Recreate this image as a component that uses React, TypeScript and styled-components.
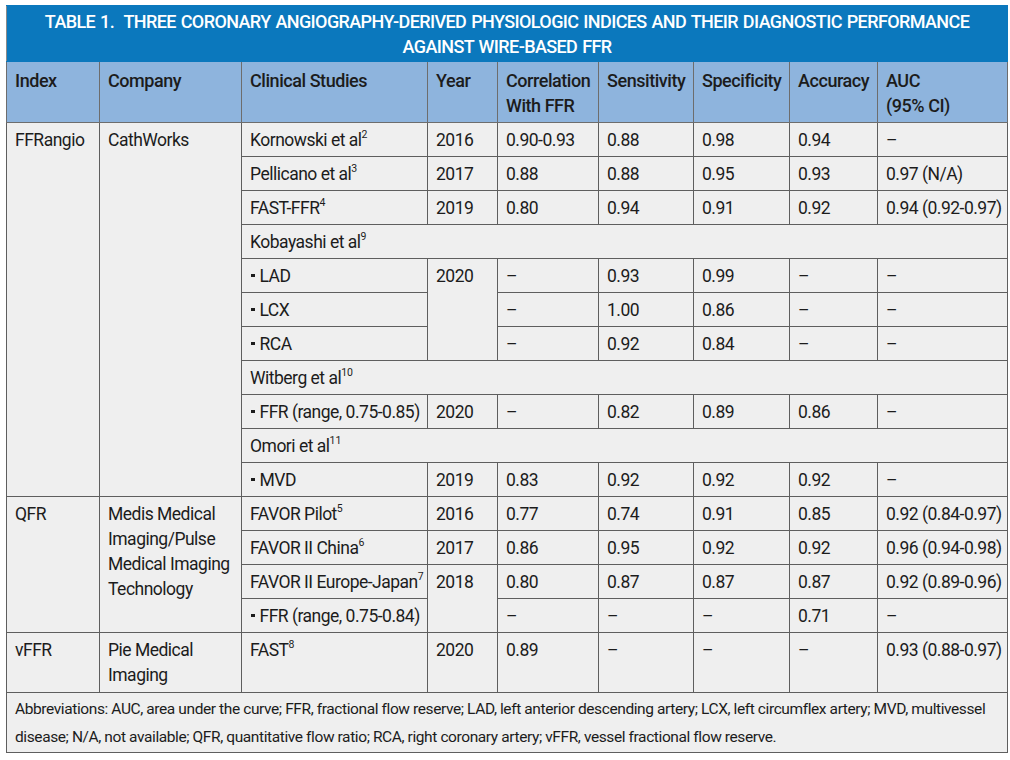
import styled, { createGlobalStyle } from "styled-components";

const Global = createGlobalStyle`
  body {
    margin: 0;
    background: #ffffff;
    font-family: Roboto, "Liberation Sans", sans-serif;
  }
`;

const Page = styled.div`
  padding: 5px 0 0 6px;
`;

const Table = styled.table`
  width: 1001px;
  border-collapse: collapse;
  table-layout: fixed;
  font-family: Roboto, "Liberation Sans", sans-serif;
  color: #1c1c1c;
`;

const TitleCell = styled.th`
  background: #0b78bd;
  color: #ffffff;
  font-size: 18px;
  font-weight: 500;
  line-height: 25px;
  letter-spacing: -0.6px;
  word-spacing: 1px;
  text-transform: uppercase;
  text-align: center;
  padding: 3px 10px 2px;
  border: 1px solid #0b78bd;
  border-left-color: #8a8a8a;
`;

const HeadCell = styled.th`
  background: #8eb4dd;
  font-size: 18px;
  font-weight: 500;
  line-height: 25px;
  letter-spacing: -0.45px;
  text-align: left;
  vertical-align: top;
  padding: 6px 8px 4px;
  height: 50px;
  border: 1px solid #6d6d6d;
  border-top: none;
  white-space: nowrap;
`;

const Cell = styled.td`
  background: #efefef;
  font-size: 17.5px;
  line-height: 24px;
  letter-spacing: -0.5px;
  vertical-align: top;
  padding: 5px 8px 4px;
  border: 1px solid #5e5e5e;
  white-space: nowrap;
`;

const WrapCell = styled(Cell)`
  line-height: 25px;
`;

const Sup = styled.sup`
  font-size: 10.5px;
  line-height: 0;
  vertical-align: 8px;
  letter-spacing: 0;
`;

const Bullet = styled.span`
  display: inline-block;
  width: 3.5px;
  height: 3.5px;
  background: #1c1c1c;
  margin: 0 5px 4px 1px;
  vertical-align: middle;
`;

const Note = styled.td`
  background: #efefef;
  font-size: 15.5px;
  line-height: 28px;
  letter-spacing: -0.4px;
  padding: 2px 8px 1px;
  border: 1px solid #5e5e5e;
`;

const widths = [93, 142, 186, 70, 101, 95, 96, 88, 130];

const headers: string[][] = [
  ["Index"],
  ["Company"],
  ["Clinical Studies"],
  ["Year"],
  ["Correlation", "With FFR"],
  ["Sensitivity"],
  ["Specificity"],
  ["Accuracy"],
  ["AUC", "(95% CI)"],
];

const Values = ({ v }: { v: string[] }) => (
  <>
    {v.map((x, i) => (
      <Cell key={i}>{x}</Cell>
    ))}
  </>
);

const Lines = ({ lines }: { lines: string[] }) => (
  <>
    {lines.map((l, i) => (
      <span key={i}>
        {i > 0 && <br />}
        {l}
      </span>
    ))}
  </>
);

const D = "–";

export default function App() {
  return (
    <Page>
      <Global />
      <Table>
        <colgroup>
          {widths.map((w, i) => (
            <col key={i} style={{ width: w }} />
          ))}
        </colgroup>
        <thead>
          <tr>
            <TitleCell colSpan={9}>
              Table 1.&nbsp; Three Coronary Angiography-Derived Physiologic
              Indices and Their Diagnostic Performance
              <br />
              Against Wire-Based FFR
            </TitleCell>
          </tr>
          <tr>
            {headers.map((h) => (
              <HeadCell key={h[0]}>
                <Lines lines={h} />
              </HeadCell>
            ))}
          </tr>
        </thead>
        <tbody>
          <tr>
            <Cell rowSpan={11}>FFRangio</Cell>
            <Cell rowSpan={11}>CathWorks</Cell>
            <Cell>
              Kornowski et al<Sup>2</Sup>
            </Cell>
            <Cell>2016</Cell>
            <Values v={["0.90-0.93", "0.88", "0.98", "0.94", D]} />
          </tr>
          <tr>
            <Cell>
              Pellicano et al<Sup>3</Sup>
            </Cell>
            <Cell>2017</Cell>
            <Values v={["0.88", "0.88", "0.95", "0.93", "0.97 (N/A)"]} />
          </tr>
          <tr>
            <Cell>
              FAST-FFR<Sup>4</Sup>
            </Cell>
            <Cell>2019</Cell>
            <Values v={["0.80", "0.94", "0.91", "0.92", "0.94 (0.92-0.97)"]} />
          </tr>
          <tr>
            <Cell colSpan={7}>
              Kobayashi et al<Sup>9</Sup>
            </Cell>
          </tr>
          <tr>
            <Cell>
              <Bullet />
              LAD
            </Cell>
            <Cell rowSpan={3}>2020</Cell>
            <Values v={[D, "0.93", "0.99", D, D]} />
          </tr>
          <tr>
            <Cell>
              <Bullet />
              LCX
            </Cell>
            <Values v={[D, "1.00", "0.86", D, D]} />
          </tr>
          <tr>
            <Cell>
              <Bullet />
              RCA
            </Cell>
            <Values v={[D, "0.92", "0.84", D, D]} />
          </tr>
          <tr>
            <Cell colSpan={7}>
              Witberg et al<Sup>10</Sup>
            </Cell>
          </tr>
          <tr>
            <Cell>
              <Bullet />
              FFR (range, 0.75-0.85)
            </Cell>
            <Cell>2020</Cell>
            <Values v={[D, "0.82", "0.89", "0.86", D]} />
          </tr>
          <tr>
            <Cell colSpan={7}>
              Omori et al<Sup>11</Sup>
            </Cell>
          </tr>
          <tr>
            <Cell>
              <Bullet />
              MVD
            </Cell>
            <Cell>2019</Cell>
            <Values v={["0.83", "0.92", "0.92", "0.92", D]} />
          </tr>
          <tr>
            <Cell rowSpan={4}>QFR</Cell>
            <WrapCell rowSpan={4}>
              <Lines
                lines={["Medis Medical", "Imaging/Pulse", "Medical Imaging", "Technology"]}
              />
            </WrapCell>
            <Cell>
              FAVOR Pilot<Sup>5</Sup>
            </Cell>
            <Cell>2016</Cell>
            <Values v={["0.77", "0.74", "0.91", "0.85", "0.92 (0.84-0.97)"]} />
          </tr>
          <tr>
            <Cell>
              FAVOR II China<Sup>6</Sup>
            </Cell>
            <Cell>2017</Cell>
            <Values v={["0.86", "0.95", "0.92", "0.92", "0.96 (0.94-0.98)"]} />
          </tr>
          <tr>
            <Cell>
              FAVOR II Europe-Japan<Sup>7</Sup>
            </Cell>
            <Cell rowSpan={2}>2018</Cell>
            <Values v={["0.80", "0.87", "0.87", "0.87", "0.92 (0.89-0.96)"]} />
          </tr>
          <tr>
            <Cell>
              <Bullet />
              FFR (range, 0.75-0.84)
            </Cell>
            <Values v={[D, D, D, "0.71", D]} />
          </tr>
          <tr>
            <Cell>vFFR</Cell>
            <WrapCell>
              <Lines lines={["Pie Medical", "Imaging"]} />
            </WrapCell>
            <Cell>
              FAST<Sup>8</Sup>
            </Cell>
            <Cell>2020</Cell>
            <Values v={["0.89", D, D, D, "0.93 (0.88-0.97)"]} />
          </tr>
          <tr>
            <Note colSpan={9}>
              Abbreviations: AUC, area under the curve; FFR, fractional flow
              reserve; LAD, left anterior descending artery; LCX, left
              circumflex artery; MVD, multivessel disease; N/A, not available;
              QFR, quantitative flow ratio; RCA, right coronary artery; vFFR,
              vessel fractional flow reserve.
            </Note>
          </tr>
        </tbody>
      </Table>
    </Page>
  );
}
